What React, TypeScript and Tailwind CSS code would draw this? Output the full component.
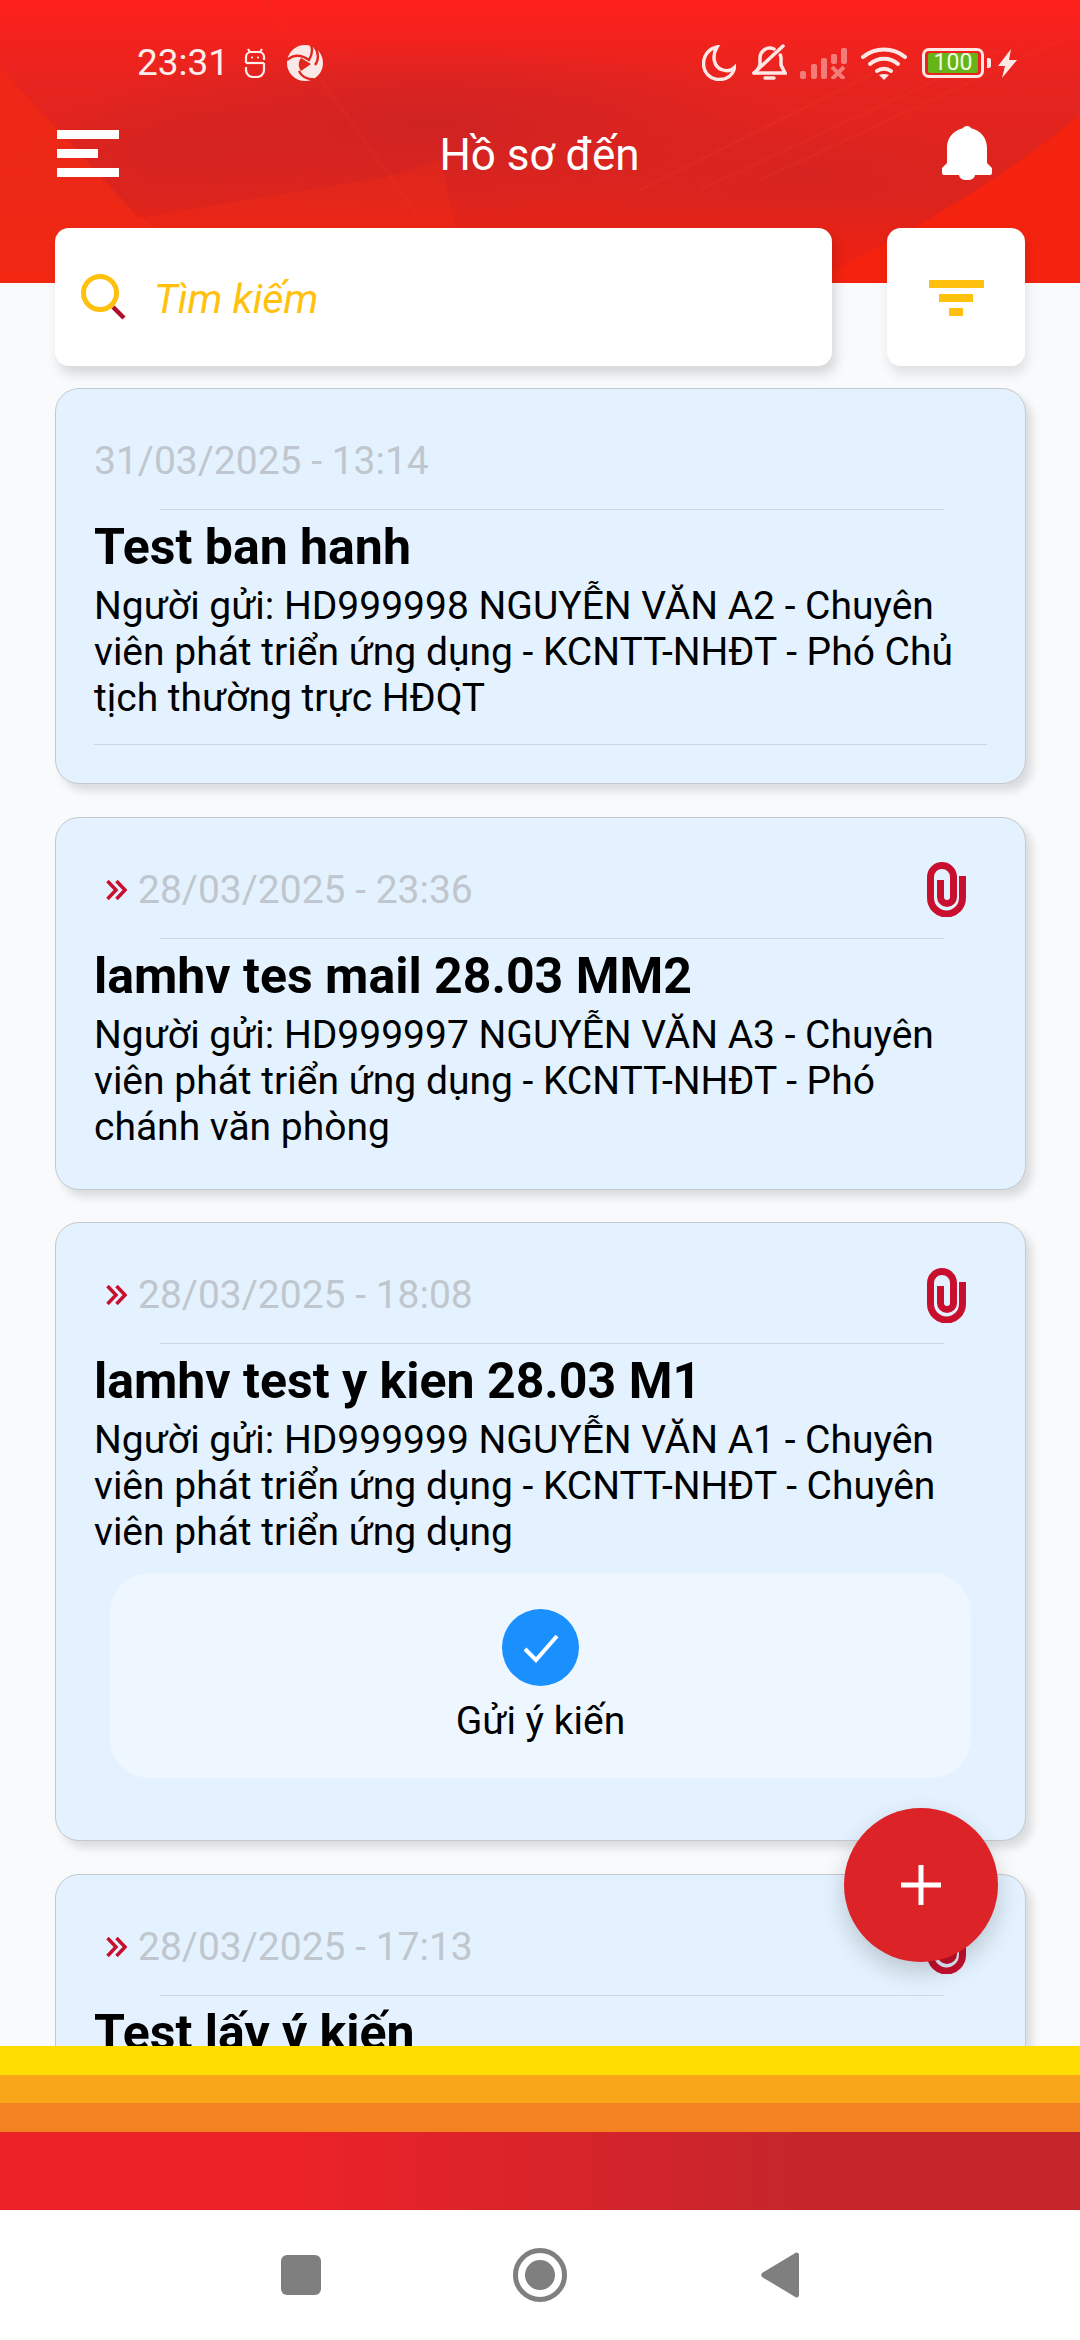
import React from 'react';

const HeaderArt = () => (
  <svg className="absolute inset-0 h-full w-full" viewBox="0 0 1080 283" preserveAspectRatio="none">
    <defs>
      <linearGradient id="hdr" x1="0" y1="0" x2="0" y2="1">
        <stop offset="0" stopColor="#ff201c" />
        <stop offset="0.3" stopColor="#e6241f" />
        <stop offset="0.7" stopColor="#dd241d" />
        <stop offset="1" stopColor="#f2200f" />
      </linearGradient>
      <radialGradient id="dark" cx="0.5" cy="0.5" r="0.5">
        <stop offset="0" stopColor="#cc2323" stopOpacity="0.9" />
        <stop offset="1" stopColor="#cc2323" stopOpacity="0" />
      </radialGradient>
      <linearGradient id="edge" x1="0" y1="0" x2="0" y2="1">
        <stop offset="0" stopColor="#f42c14" stopOpacity="0.2" />
        <stop offset="1" stopColor="#f42c14" stopOpacity="0.8" />
      </linearGradient>
    </defs>
    <rect width="1080" height="283" fill="url(#hdr)" />
    <ellipse cx="430" cy="125" rx="360" ry="85" fill="url(#dark)" />
    <ellipse cx="170" cy="150" rx="150" ry="60" fill="url(#dark)" opacity="0.55" />
    <ellipse cx="800" cy="170" rx="240" ry="60" fill="url(#dark)" opacity="0.45" />
    <polygon points="0,67 138,217 145,217 386,177 440,160 470,283 0,283" fill="url(#edge)" opacity="0.6" />
    <polygon points="0,67 138,217 260,283 0,283" fill="#f12a14" opacity="0.6" />
    <polygon points="262,0 423,227 428,227 268,0" fill="#f33a22" opacity="0.14" />
    <path d="M1080 115 C1020 165 960 200 925 222 L810 283 L1080 283 Z" fill="#f4230f" />
    <path d="M640 190 L900 60 M700 190 L1000 50 M760 180 L1060 40" stroke="#f0402c" strokeWidth="3" opacity="0.15" fill="none" />
  </svg>
);

const StatusLeft = () => (
  <div className="flex items-center">
    <span className="w-[88px] text-[37px] leading-[36px] text-[#fdeeec]">23:31</span>
    <svg className="ml-[19px] h-[30px] w-[22px]" viewBox="0 0 22 30" fill="none" stroke="#fdeeec" strokeWidth="2.2">
      <path d="M4 1l2 3M18 1l-2 3" />
      <path d="M2 15V9a5 5 0 0 1 5-5h8a5 5 0 0 1 5 5v3" />
      <path d="M2 15H20" />
      <path d="M2 19v3a7 7 0 0 0 7 7h4a7 7 0 0 0 7-7v-7" />
      <circle cx="8" cy="9.500" r="1.100" fill="#fdeeec" stroke="none" />
      <circle cx="14" cy="9.500" r="1.100" fill="#fdeeec" stroke="none" />
    </svg>
    <svg className="ml-[21px] h-[36px] w-[36px]" viewBox="0 0 36 36">
      <circle cx="18" cy="18" r="18" fill="#fbe9e7" />
      <path d="M0 15c7-6 15-5 22 0 3-5 4-10 2-15l3 1c5 6 5 14 1 19" fill="none" stroke="#e0261d" strokeWidth="2.4" />
      <path d="M14 13l10 6-10 7c-3-4-3-9 0-13z" fill="#e0261d" />
      <path d="M12 26c2 5 8 9 15 8" fill="none" stroke="#e0261d" strokeWidth="2.2" />
    </svg>
  </div>
);

const StatusRight = () => (
  <div className="flex items-center">
    <svg className="h-[36px] w-[34px]" viewBox="0 0 34 36" fill="none" stroke="#fde8e6" strokeWidth="3.5">
      <path d="M15 2C6 4 1.500 11 1.500 19c0 8.500 7 15.500 15.500 15.500 8 0 14-4.500 15.500-12-3 3-8 4-13 2C12 22 9.500 11 15 2z" />
    </svg>
    <svg className="ml-[16px] h-[38px] w-[35px]" viewBox="0 0 35 38" fill="none" stroke="#fde8e6" strokeWidth="3.5" strokeLinecap="round">
      <path d="M2 29h31l-4-8v-7c0-1-.3-2-.7-3" />
      <path d="M22 5c-7-3-14 2-14 9v7l-2 4" />
      <path d="M2 29L31 2" />
      <path d="M13 34h9" strokeWidth="3.500" />
    </svg>
    <svg className="ml-[13px] h-[31px] w-[47px]" viewBox="0 0 47 31" fill="#fde8e6" opacity="0.45">
      <rect x="0" y="23" width="6" height="8" rx="2" />
      <rect x="11" y="16" width="6" height="15" rx="2" />
      <rect x="21" y="10" width="6" height="21" rx="2" />
      <rect x="31" y="6" width="6" height="10" rx="2" />
      <rect x="41" y="0" width="6" height="16" rx="2" />
      <path d="M32 19l12 12M44 19L32 31" stroke="#fde8e6" strokeWidth="4" fill="none" />
    </svg>
    <svg className="ml-[14px] h-[33px] w-[46px]" viewBox="0 0 46 33" fill="none" stroke="#fde8e6" strokeWidth="4" strokeLinecap="round">
      <path d="M2 10c12-10 30-10 42 0" />
      <path d="M9 17c8-7 20-7 28 0" />
      <path d="M16 24c4-3 10-3 14 0" />
      <path d="M23 33l-5-5c3-1.500 7-1.500 10 0z" fill="#fde8e6" stroke="none" />
    </svg>
    <div className="ml-[15px] flex h-[30px] w-[62px] items-center justify-center rounded-[7px] border-[3px] border-[#fde8e6]">
      <span className="flex h-[20px] w-[50px] items-center justify-center rounded-[2px] bg-[#64b518] text-[23px] leading-[20px] text-[#f3fae6]">100</span>
    </div>
    <div className="ml-[3px] h-[10px] w-[4px] rounded-r-[2px] bg-[#fde8e6]" />
    <svg className="ml-[7px] h-[29px] w-[19px]" viewBox="0 0 19 29" fill="#fde8e6">
      <path d="M13 0L0 17h7L4 29l15-18h-8z" />
    </svg>
  </div>
);

const Clip = () => (
  <svg className="h-[55px] w-[39px]" viewBox="0 0 39 55" fill="none" stroke="#c8102e" strokeWidth="7">
    <path d="M35.500 14V36A16 16 0 0 1 3.500 36V15A11.500 11.500 0 0 1 26.500 15V35A6.500 6.500 0 0 1 13.500 35V18" />
  </svg>
);

const Chevrons = () => (
  <svg className="ml-[12px] mr-[11px] h-[20px] w-[21px]" viewBox="0 0 21 20" fill="none" stroke="#c8102e" strokeWidth="3.500">
    <path d="M1.500 1l8.500 9-8.500 9M10.500 1l8.500 9-8.500 9" />
  </svg>
);

type CardProps = {
  date: string;
  forwarded?: boolean;
  title: string;
  body: string;
  footerLine?: boolean;
  children?: React.ReactNode;
};

const Card = ({ date, forwarded, title, body, footerLine, children }: CardProps) => (
  <div className="shrink-0 rounded-[24px] border-[1.5px] border-[#c5c9cd] bg-[#e3f2fe] pb-[39px] shadow-[6px_7px_9px_rgba(0,0,0,0.12)]">
    <div className="mt-[49px] flex h-[46px] items-center pl-[38px] pr-[59px]">
      {forwarded && <Chevrons />}
      <span className="text-[39px] leading-[46px] text-[#c0c6cd]">{date}</span>
      {forwarded && (
        <div className="ml-auto">
          <Clip />
        </div>
      )}
    </div>
    <div className="ml-[104px] mr-[81px] mt-[25px] h-[1px] bg-[#ced5dc]" />
    <h3 className="mt-[1px] px-[38px] text-[50px] font-bold leading-[72px] text-black">{title}</h3>
    <p className="px-[38px] text-[39px] leading-[46px] text-black">{body}</p>
    {footerLine && <div className="mx-[38px] -mb-[1px] mt-[23px] h-[1px] bg-[#ced5dc]" />}
    {children}
  </div>
);

export default function App() {
  return (
    <div className="relative flex h-[2340px] w-[1080px] flex-col overflow-hidden bg-[#f8fafc] font-[Roboto,sans-serif]">
      <header className="relative h-[283px] shrink-0">
        <HeaderArt />
        <div className="relative flex items-center justify-between pl-[137px] pr-[63px] pt-[44px]">
          <StatusLeft />
          <StatusRight />
        </div>
        <div className="relative mt-[41px] flex h-[60px] items-center justify-between pl-[57px] pr-[88px]">
          <div className="flex w-[62px] flex-col gap-[10px]">
            <span className="h-[9px] w-[62px] bg-white" />
            <span className="h-[9px] w-[41px] bg-white" />
            <span className="h-[9px] w-[62px] bg-white" />
          </div>
          <h1 className="ml-[18px] mt-[3px] text-[44px] leading-[60px] text-white">Hồ sơ đến</h1>
          <svg className="h-[54px] w-[50px]" viewBox="0 0 50 54" fill="#ffffff">
            <circle cx="25" cy="4.500" r="4.500" />
            <path d="M25 2C14 2 5 10 5 22v15l-5 5v5a2 2 0 0 0 2 2h46a2 2 0 0 0 2-2v-5l-5-5V22C45 10 36 2 25 2z" />
            <path d="M17 48h16c0 4-3 6-8 6s-8-2-8-6z" />
          </svg>
        </div>
      </header>

      <div className="relative z-10 -mt-[55px] flex shrink-0 justify-between px-[55px]">
        <div className="flex h-[138px] w-[777px] items-center rounded-[14px] bg-white pl-[26px] shadow-[4px_8px_12px_rgba(0,0,0,0.14)]">
          <svg className="h-[46px] w-[46px]" viewBox="0 0 46 46" fill="none">
            <path d="M32 33l11 11" stroke="#ae0f2b" strokeWidth="4.500" />
            <circle cx="19" cy="19" r="16.500" stroke="#ffc10e" strokeWidth="5" />
          </svg>
          <span className="ml-[27px] mt-[5px] text-[41px] italic text-[#ffc10e]">Tìm kiếm</span>
        </div>
        <div className="flex h-[138px] w-[138px] flex-col items-center justify-center gap-[6px] rounded-[14px] bg-white pt-[2px] shadow-[2px_8px_12px_rgba(0,0,0,0.1)]">
          <span className="h-[8px] w-[55px] bg-[#ffc10e]" />
          <span className="h-[8px] w-[34px] bg-[#ffc10e]" />
          <span className="h-[8px] w-[14px] bg-[#ffc10e]" />
        </div>
      </div>

      <main className="mt-[22px] flex min-h-0 flex-1 flex-col gap-[32.5px] overflow-hidden pl-[55px] pr-[54px]">
        <Card
          date="31/03/2025 - 13:14"
          title="Test ban hanh"
          body="Người gửi: HD999998 NGUYỄN VĂN A2 - Chuyên viên phát triển ứng dụng - KCNTT-NHĐT - Phó Chủ tịch thường trực HĐQT"
          footerLine
        />
        <Card
          forwarded
          date="28/03/2025 - 23:36"
          title="lamhv tes mail 28.03 MM2"
          body="Người gửi: HD999997 NGUYỄN VĂN A3 - Chuyên viên phát triển ứng dụng - KCNTT-NHĐT - Phó chánh văn phòng"
        />
        <Card
          forwarded
          date="28/03/2025 - 18:08"
          title="lamhv test y kien 28.03 M1"
          body="Người gửi: HD999999 NGUYỄN VĂN A1 - Chuyên viên phát triển ứng dụng - KCNTT-NHĐT - Chuyên viên phát triển ứng dụng"
        >
          <div className="mx-[54px] mb-[23px] mt-[18px] flex h-[205px] flex-col items-center rounded-[40px] bg-[#eef7ff] pt-[36px]">
            <div className="flex h-[77px] w-[77px] items-center justify-center rounded-full bg-[#1a90ff]">
              <svg className="h-[36px] w-[36px]" viewBox="0 0 36 36" fill="none" stroke="#ffffff" strokeWidth="4">
                <path d="M2 19l11 11L34 6" />
              </svg>
            </div>
            <span className="mt-[12px] text-[39px] leading-[46px] text-black">Gửi ý kiến</span>
          </div>
        </Card>
        <Card
          forwarded
          date="28/03/2025 - 17:13"
          title="Test lấy ý kiến"
          body="Người gửi: HD999999 NGUYỄN VĂN A1"
        />
      </main>

      <div className="h-[29px] shrink-0 bg-[#ffdd00]" />
      <div className="h-[28px] shrink-0 bg-[#faa61a]" />
      <div className="h-[29px] shrink-0 bg-[#f58220]" />
      <div className="h-[78px] shrink-0 bg-[linear-gradient(90deg,#ed2228_25%,#c4262c_75%)]" />

      <nav className="flex h-[130px] shrink-0 items-center justify-center bg-white">
        <div className="h-[40px] w-[40px] rounded-[6px] bg-[#7f7f7f]" />
        <div className="ml-[192px] flex h-[54px] w-[54px] items-center justify-center rounded-full border-[5px] border-[#7f7f7f]">
          <div className="h-[30px] w-[30px] rounded-full bg-[#7f7f7f]" />
        </div>
        <svg className="ml-[194px] h-[46px] w-[38px]" viewBox="0 0 38 46" fill="#7f7f7f">
          <path d="M35 0.500a2.500 2.500 0 0 1 3 2.500v40a2.500 2.500 0 0 1-3 2.500a3 3 0 0 1-1.500-1L1 25a3.500 3.500 0 0 1 0-4L33.500 1.500a3 3 0 0 1 1.500-1z" />
        </svg>
      </nav>

      <button className="absolute bottom-[378px] right-[82px] z-20 flex h-[154px] w-[154px] items-center justify-center rounded-full bg-[#dc2327] shadow-[0_10px_24px_rgba(0,0,0,0.18)]">
        <svg className="h-[40px] w-[40px]" viewBox="0 0 40 40" fill="#ffffff">
          <rect x="17.500" y="0" width="5" height="40" />
          <rect x="0" y="17.500" width="40" height="5" />
        </svg>
      </button>
    </div>
  );
}
